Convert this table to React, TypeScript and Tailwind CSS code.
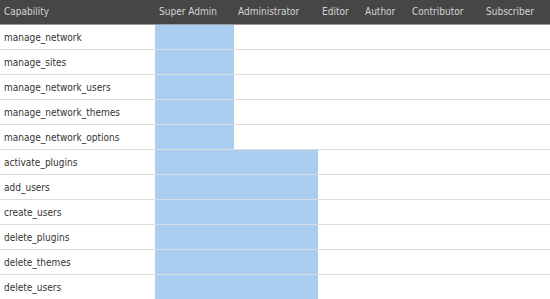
const roles = [
  { name: "Super Admin", w: "w-[79px]" },
  { name: "Administrator", w: "w-[84px]" },
  { name: "Editor", w: "w-[43px]" },
  { name: "Author", w: "w-[47px]" },
  { name: "Contributor", w: "w-[74px]" },
  { name: "Subscriber", w: "w-[68px]" },
]

// how many role columns (from the left) have each capability
const capabilities: [string, number][] = [
  ["manage_network", 1],
  ["manage_sites", 1],
  ["manage_network_users", 1],
  ["manage_network_themes", 1],
  ["manage_network_options", 1],
  ["activate_plugins", 2],
  ["add_users", 2],
  ["create_users", 2],
  ["delete_plugins", 2],
  ["delete_themes", 2],
  ["delete_users", 2],
]

export default function App() {
  return (
    <div className="w-[550px] h-[299px] overflow-hidden bg-white font-['DejaVu_Sans_Condensed','DejaVu_Sans',sans-serif] text-[10px]">
      <table className="w-[550px] table-fixed border-collapse">
        <thead>
          <tr className="bg-[#464646] text-[#d4d4d4] border-b border-[#9a9a9a]">
            <th className="w-[155px] h-[24px] pl-[4px] text-left font-normal">Capability</th>
            {roles.map((r) => (
              <th key={r.name} className={`${r.w} h-[24px] pl-[4px] text-left font-normal`}>
                {r.name}
              </th>
            ))}
          </tr>
        </thead>
        <tbody>
          {capabilities.map(([cap, n]) => (
            <tr key={cap} className="border-b border-[#dcdcdc] text-[#333]">
              <td className="h-[25px] pl-[4px] pt-[2px]">{cap}</td>
              {roles.map((r, i) => (
                <td key={r.name} className={i < n ? "bg-[#abcdf0]" : ""} />
              ))}
            </tr>
          ))}
        </tbody>
      </table>
    </div>
  )
}
